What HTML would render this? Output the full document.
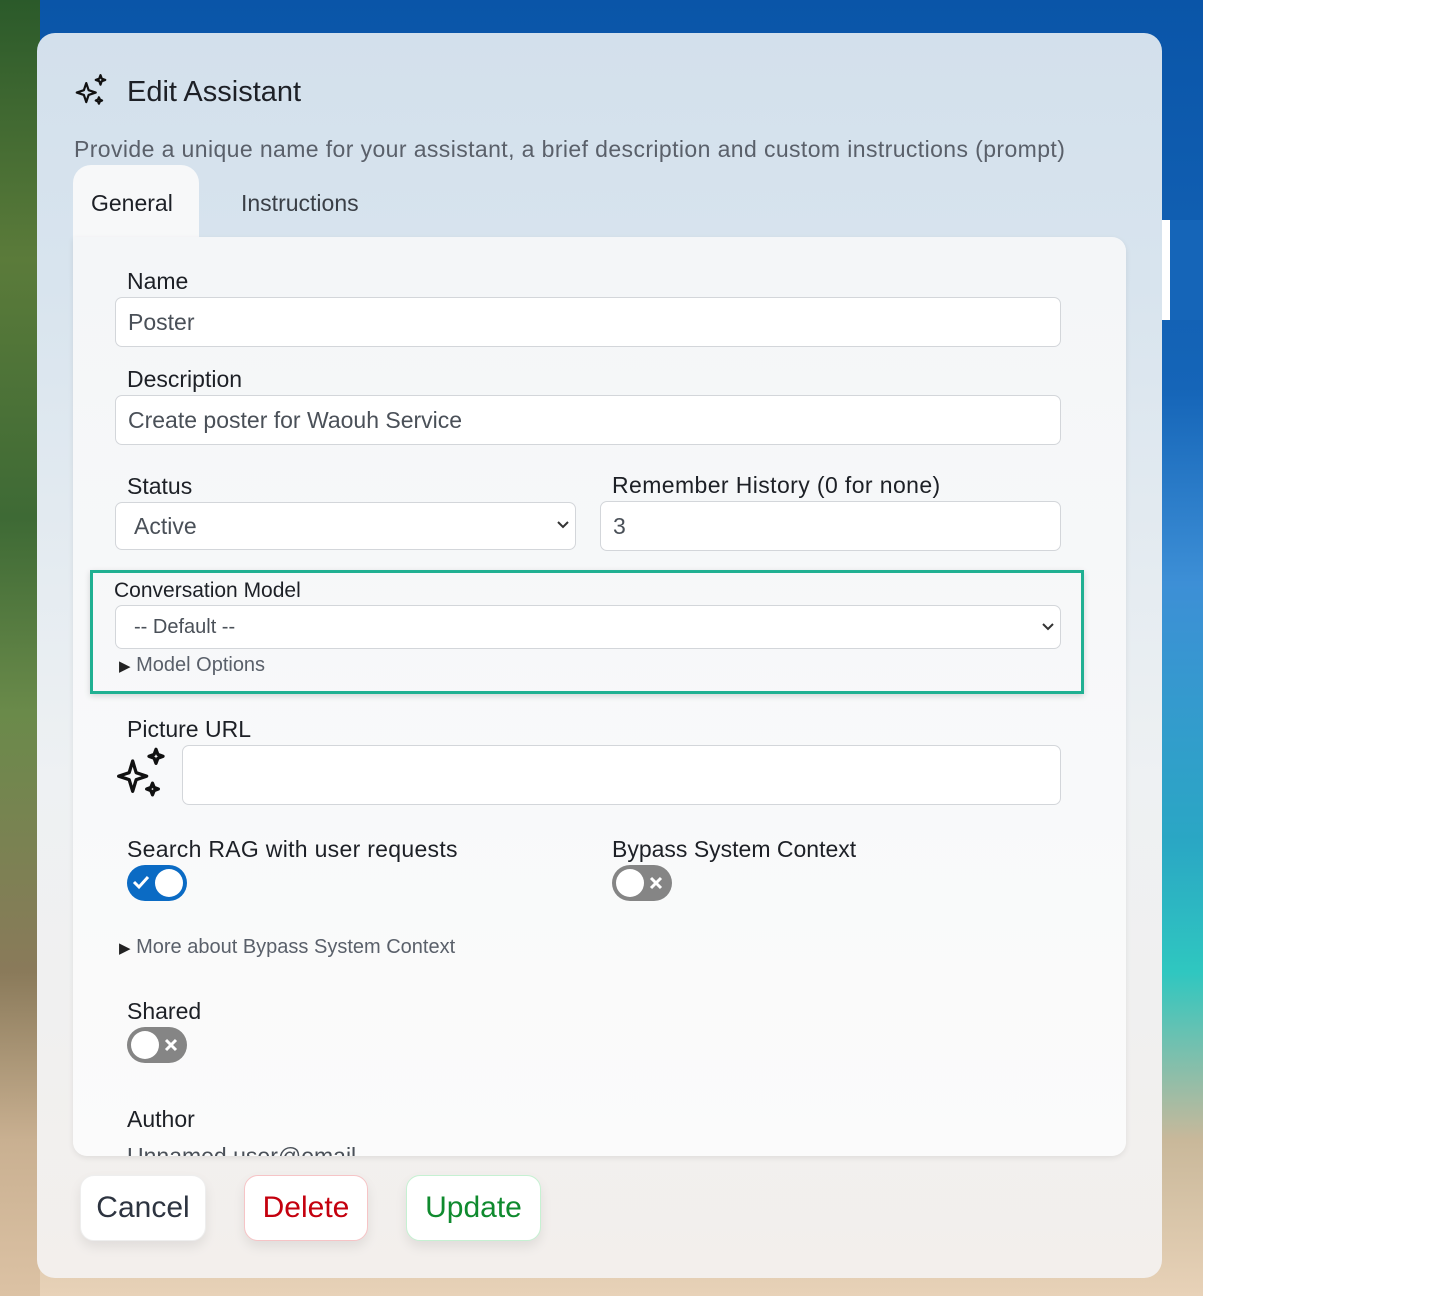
<!DOCTYPE html>
<html><head><meta charset="utf-8"><style>
*{box-sizing:border-box;margin:0;padding:0}
body{width:1450px;height:1296px;position:relative;overflow:hidden;background:#fff;font-family:"Liberation Sans",sans-serif;color:#212529}
.bg{position:absolute;left:0;top:0;width:1203px;height:1296px;background:linear-gradient(180deg,#0a55a8 0%,#1565b8 30%,#3d8fd6 45%,#2aa7c4 65%,#2fc7c0 75%,#c9b89a 88%,#e8d2b8 100%)}
.palm{position:absolute;left:0;top:0;width:40px;height:1296px;background:linear-gradient(180deg,#2b5a2a 0%,#5b7b3a 20%,#3e6a35 40%,#6a8a4a 55%,#8a7a5a 75%,#c9b091 88%,#dcc2a4 100%)}
.card{position:absolute;left:37px;top:33px;width:1125px;height:1245px;border-radius:18px;background:linear-gradient(180deg,#d3e0ec 0%,#d8e4ee 20%,#eef1f3 60%,#f3efec 100%)}
.abs{position:absolute}
.h{font-size:29px;color:#1d2026}
.sub{font-size:23px;color:#5a606a;white-space:nowrap;letter-spacing:0.4px}
.tab{left:73px;top:165px;width:126px;height:80px;background:#f7f8f9;border-radius:18px 18px 0 0}
.panel{left:73px;top:237px;width:1053px;height:919px;background:linear-gradient(180deg,#f4f6f8,#fbfbfb);border-radius:0 14px 14px 14px;box-shadow:0 2px 6px rgba(0,0,0,.08);overflow:hidden}
.lbl{font-size:23px;font-weight:500;color:#1d2026}
.inp{background:#fff;border:1px solid #d3d6da;border-radius:7px;font-size:23px;color:#4a5058;padding-left:12px;display:flex;align-items:center}
.tog{width:60px;height:36px;border-radius:18px;position:absolute}
.btn{position:absolute;top:1175px;height:66px;background:#fff;border-radius:14px;font-size:30px;display:flex;align-items:center;justify-content:center;box-shadow:0 6px 12px rgba(0,0,0,.08)}
</style></head><body>
<div class="bg"></div><div class="palm"></div>
<div class="abs" style="left:1162px;top:220px;width:41px;height:100px;background:linear-gradient(90deg,#fff 0 8px,#1565b8 8px)"></div>
<div class="card"></div>
<svg class="abs" style="left:72px;top:72px" width="38" height="38" viewBox="0 0 24 24" fill="none" stroke="#111" stroke-width="1.4" stroke-linejoin="round"><path d="M9 7l1.5 4.5L15 13l-4.5 1.5L9 19l-1.5-4.5L3 13l4.5-1.5z"/><path d="M18 2l.8 2.2L21 5l-2.2.8L18 8l-.8-2.2L15 5l2.2-.8z"/><path d="M17 16l.6 1.4L19 18l-1.4.6L17 20l-.6-1.4L15 18l1.4-.6z"/></svg>
<div class="abs h" style="left:127px;top:76px">Edit Assistant</div>
<div class="abs sub" style="left:74px;top:136px">Provide a unique name for your assistant, a brief description and custom instructions (prompt)</div>
<div class="abs tab"></div>
<div class="abs lbl" style="left:91px;top:190px;font-size:23px">General</div>
<div class="abs" style="left:241px;top:190px;font-size:23px;color:#3a3f46">Instructions</div>
<div class="abs panel"><div class="abs" style="left:54px;top:906px;font-size:23px;color:#4a5058">Unnamed user@email</div></div>
<div class="abs lbl" style="left:127px;top:268px">Name</div>
<div class="abs inp" style="left:115px;top:297px;width:946px;height:50px">Poster</div>
<div class="abs lbl" style="left:127px;top:366px">Description</div>
<div class="abs inp" style="left:115px;top:395px;width:946px;height:50px">Create poster for Waouh Service</div>
<div class="abs lbl" style="left:127px;top:473px">Status</div>
<div class="abs inp" style="left:115px;top:502px;width:461px;height:48px;padding-left:18px">Active</div>
<svg class="abs" style="left:556px;top:520px" width="14" height="10" viewBox="0 0 14 10"><path d="M2 2l5 5 5-5" stroke="#333" stroke-width="2" fill="none"/></svg>
<div class="abs lbl" style="left:612px;top:472px;letter-spacing:0.4px">Remember History (0 for none)</div>
<div class="abs inp" style="left:600px;top:501px;width:461px;height:50px">3</div>
<div class="abs" style="left:90px;top:570px;width:994px;height:124px;border:3px solid #20b092;box-shadow:0 2px 6px rgba(0,0,0,.15)"></div>
<div class="abs" style="left:114px;top:579px;font-size:21px;font-weight:500;color:#1d2026">Conversation Model</div>
<div class="abs inp" style="left:115px;top:605px;width:946px;height:44px;font-size:20px;padding-left:18px">-- Default --</div>
<svg class="abs" style="left:1041px;top:622px" width="14" height="10" viewBox="0 0 14 10"><path d="M2 2l5 5 5-5" stroke="#333" stroke-width="2" fill="none"/></svg>
<div class="abs" style="left:119px;top:654px;font-size:20px;color:#5a606a"><span style="font-size:15px;color:#222">▶</span> Model Options</div>
<div class="abs lbl" style="left:127px;top:716px">Picture URL</div>
<svg class="abs" style="left:114px;top:746px" width="56" height="58" viewBox="0 0 24 24" fill="none" stroke="#111" stroke-width="1.4" stroke-linejoin="round"><path d="M8 6l1.5 5L14 12.5 9.5 14 8 19l-1.5-5L2 12.5 6.5 11z"/><path d="M18 1l.8 2.2L21 4l-2.2.8L18 7l-.8-2.2L15 4l2.2-.8z"/><path d="M16.5 15.5l.7 1.8 1.8.7-1.8.7-.7 1.8-.7-1.8L14 18l1.8-.7z"/></svg>
<div class="abs inp" style="left:182px;top:745px;width:879px;height:60px"></div>
<div class="abs lbl" style="left:127px;top:836px;letter-spacing:0.3px">Search RAG with user requests</div>
<div class="tog" style="left:127px;top:865px;background:#0b6bc4"><div class="abs" style="right:4px;top:4px;width:28px;height:28px;border-radius:50%;background:#fff"></div><svg class="abs" style="left:5px;top:9px" width="18" height="16"><path d="M2 8l5 5L16 3" stroke="#fff" stroke-width="3" fill="none"/></svg></div>
<div class="abs lbl" style="left:612px;top:836px">Bypass System Context</div>
<div class="tog" style="left:612px;top:865px;background:#858585"><div class="abs" style="left:4px;top:4px;width:28px;height:28px;border-radius:50%;background:#fff"></div><svg class="abs" style="left:37px;top:11px" width="14" height="14"><path d="M2 2l10 10M12 2L2 12" stroke="#fff" stroke-width="3"/></svg></div>
<div class="abs" style="left:119px;top:936px;font-size:20px;color:#5a606a"><span style="font-size:15px;color:#222">▶</span> More about Bypass System Context</div>
<div class="abs lbl" style="left:127px;top:998px">Shared</div>
<div class="tog" style="left:127px;top:1027px;background:#858585"><div class="abs" style="left:4px;top:4px;width:28px;height:28px;border-radius:50%;background:#fff"></div><svg class="abs" style="left:37px;top:11px" width="14" height="14"><path d="M2 2l10 10M12 2L2 12" stroke="#fff" stroke-width="3"/></svg></div>
<div class="abs lbl" style="left:127px;top:1106px">Author</div>
<div class="btn" style="left:80px;width:126px;color:#2d3440;border:1px solid #eee">Cancel</div>
<div class="btn" style="left:244px;width:124px;color:#c4000e;border:1px solid #f6c4c6">Delete</div>
<div class="btn" style="left:406px;width:135px;color:#0f8a2e;border:1px solid #c6f1d2">Update</div>
</body></html>
